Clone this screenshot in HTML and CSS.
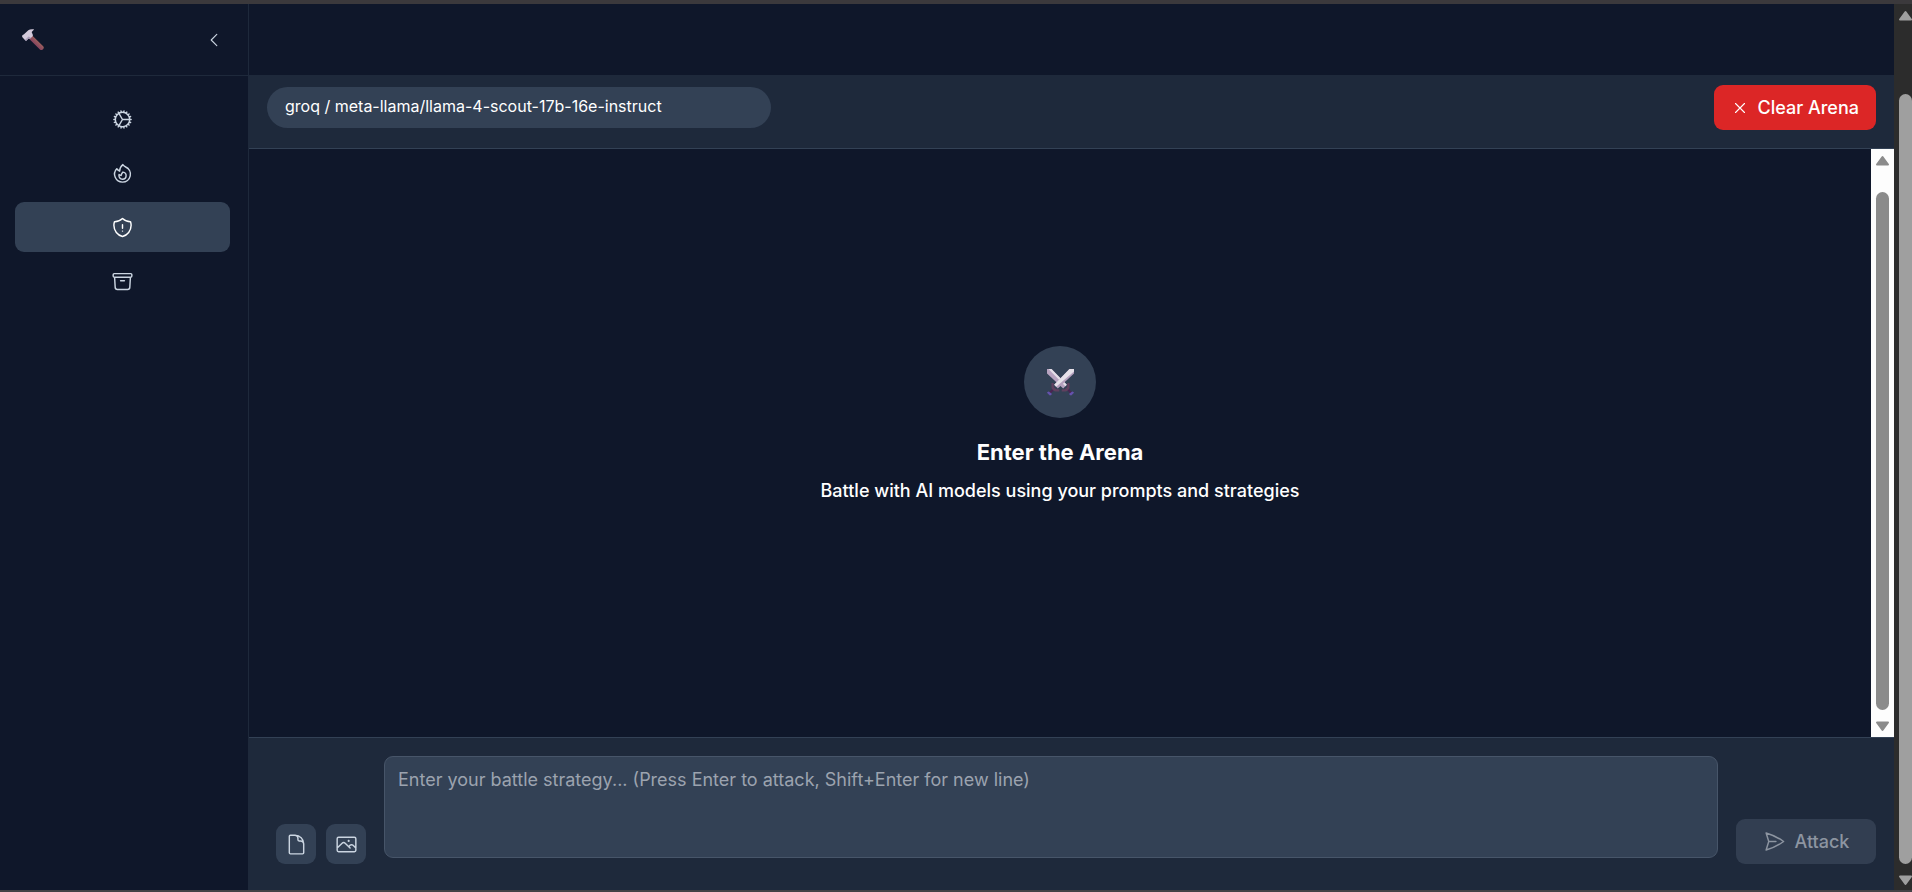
FILE: index.html
```html
<!DOCTYPE html>
<html lang="en">
<head>
<meta charset="utf-8">
<title>Arena</title>
<link rel="stylesheet" href="styles.css">
</head>
<body>
<div class="app">
  <aside class="sidebar">
    <div class="brand">
      <svg class="hammer" viewBox="0 0 22 22" role="img" aria-label="Hammer">
        <defs>
          <linearGradient id="handle" x1="0" y1="1" x2="1" y2="0">
            <stop offset=".3" stop-color="#7c3860"/><stop offset=".7" stop-color="#a56a5c"/>
          </linearGradient>
        </defs>
        <path d="M6.800 9.600 10.200 6.400 21.200 17.200q1.100 1.200.2 2.500-.4 1.100-1.600 1.300-1.100.2-1.900-.6Z" fill="url(#handle)"/>
        <path d="M.4 6.300 2 5.300 6.300 1.300Q8.200-.2 11.600.3q.7.300 0 .7L9.900 2.700q-.4.900.4 1.700l.6 1.600q.1 1-.7 1.700L8.200 9.600l-1.700-.1-1.900 2.100q-.9.300-1.700-.5L.4 8.300Q-.2 7 .4 6.300Z" fill="#d3cadb"/>
        <path d="M2.900 11.100 6.500 7.600l2.300.9-.6 1.100-1.700-.1-1.900 2.100q-.9.300-1.700-.5Z" fill="#aa9eba"/>
      </svg>
      <button class="collapse" type="button" aria-label="Collapse sidebar">
        <svg class="icon icon-sm" viewBox="0 0 24 24"><path d="M15.750 19.500 8.250 12l7.500-7.500"/></svg>
      </button>
    </div>
    <nav class="nav" aria-label="Main">
      <a class="nav-item" href="#settings" aria-label="Settings">
        <svg class="icon" viewBox="0 0 24 24"><path d="M4.500 12a7.500 7.500 0 0 0 15 0m-15 0a7.500 7.500 0 1 1 15 0m-15 0H3m16.500 0H21m-1.500 0H12m-8.457 3.077 1.410-.513m14.095-5.130 1.410-.513M5.106 17.785l1.150-.964m11.490-9.642 1.149-.964M7.501 19.795l.750-1.300m7.500-12.990.750-1.300m-6.063 16.658.260-1.477m2.605-14.772.260-1.477m0 17.726-.260-1.477M10.698 4.614l-.260-1.477M16.500 19.794l-.750-1.299M7.500 4.205 12 12m6.894 5.785-1.149-.964M6.256 7.178l-1.150-.964m15.352 8.864-1.410-.513M4.954 9.435l-1.410-.514M12.002 12l-3.750 6.495"/></svg>
      </a>
      <a class="nav-item" href="#fire" aria-label="Forge">
        <svg class="icon" viewBox="0 0 24 24"><path d="M15.362 5.214A8.252 8.252 0 0 1 12 21 8.250 8.250 0 0 1 6.038 7.047 8.287 8.287 0 0 0 9 9.601a8.983 8.983 0 0 1 3.361-6.867 8.210 8.210 0 0 0 3 2.480Z"/><path d="M12 18a3.750 3.750 0 0 0 .495-7.468 5.990 5.990 0 0 0-1.925 3.547 5.975 5.975 0 0 1-2.133-1.001A3.750 3.750 0 0 0 12 18Z"/></svg>
      </a>
      <a class="nav-item is-active" href="#arena" aria-label="Arena" aria-current="page">
        <svg class="icon" viewBox="0 0 24 24"><path d="M12 9v3.750m0-10.036A11.959 11.959 0 0 1 3.598 6 11.990 11.990 0 0 0 3 9.750c0 5.592 3.824 10.290 9 11.622 5.176-1.332 9-6.030 9-11.622 0-1.310-.210-2.570-.598-3.750h-.152c-3.196 0-6.100-1.250-8.250-3.286Zm0 13.036h.008v.008H12v-.008Z"/></svg>
      </a>
      <a class="nav-item" href="#archive" aria-label="Archive">
        <svg class="icon" viewBox="0 0 24 24"><path d="m20.250 7.500-.625 10.632a2.250 2.250 0 0 1-2.247 2.118H6.622a2.250 2.250 0 0 1-2.247-2.118L3.750 7.500M10 11.250h4M3.375 7.500h17.250c.621 0 1.125-.504 1.125-1.125v-1.500c0-.621-.504-1.125-1.125-1.125H3.375c-.621 0-1.125.504-1.125 1.125v1.500c0 .621.504 1.125 1.125 1.125Z"/></svg>
      </a>
    </nav>
  </aside>

  <main class="main">
    <header class="topbar"></header>
    <div class="toolbar">
      <div class="model">groq / meta-llama/llama-4-scout-17b-16e-instruct</div>
      <button class="btn btn-danger" type="button">
        <svg class="icon icon-sm" viewBox="0 0 24 24"><path d="M6 18 18 6M6 6l12 12"/></svg>
        Clear Arena
      </button>
    </div>

    <div class="arena">
      <section class="empty">
        <div class="badge">
          <svg class="swords" viewBox="0 0 27 27" role="img" aria-label="Crossed swords">
            <path d="M0 0h4.500L19.800 15.800l-3.600 3.600L0 4.500Z" fill="#b7a3c0"/>
            <path d="M1.500 0h3L19.800 15.800l-1.500 1.500Z" fill="#e4dfe8"/>
            <path d="M22.500 14v4.500q-.5 3.500-4 4h-3.800v-2.300h2.600q2.600-.5 3-3V14Z" fill="#60405f"/>
            <path d="m20.500 21.800 1.500-1.500 2.800 2.600-1.300 1.600Z" fill="#4b2452"/>
            <path d="m22.200 24.800 3-2.400q1.600.1 1.800 1.300l-2.800 2.700q-2-.1-2-1.600Z" fill="#6552ad"/>
            <path d="M27 0h-4.500L7.200 15.800l3.600 3.600L27 4.500Z" fill="#b49fbd"/>
            <path d="M27 0h-4.500L7.200 15.800l2 2L27 2.500Z" fill="#e6e1e9"/>
            <path d="M4.500 14v4.500q.5 3.500 4 4h3.800v-2.300H9.700q-2.600-.5-3-3V14Z" fill="#60405f"/>
            <path d="M6.500 21.800 5 20.300l-2.800 2.600 1.300 1.600Z" fill="#4b2452"/>
            <path d="m4.800 24.800-3-2.400Q.2 22.500 0 23.700l2.800 2.700q2-.1 2-1.600Z" fill="#6552ad"/>
          </svg>
        </div>
        <h1 class="empty-title">Enter the Arena</h1>
        <p class="empty-text">Battle with AI models using your prompts and strategies</p>
      </section>
      <div class="scroll scroll-light" aria-hidden="true">
        <svg class="arrow" viewBox="0 0 15 11"><path d="M7.500 2 13 9.500H2Z"/></svg>
        <div class="thumb"></div>
        <svg class="arrow" viewBox="0 0 15 11"><path d="M7.500 9 2 1.500h11Z"/></svg>
      </div>
    </div>

    <form class="composer">
      <div class="attach">
        <button class="btn-icon" type="button" aria-label="Attach file">
          <svg class="icon" viewBox="0 0 24 24"><path d="M19.500 14.250v-2.625a3.375 3.375 0 0 0-3.375-3.375h-1.500A1.125 1.125 0 0 1 13.500 7.125v-1.500a3.375 3.375 0 0 0-3.375-3.375H8.250m2.250 0H5.625c-.621 0-1.125.504-1.125 1.125v17.250c0 .621.504 1.125 1.125 1.125h12.750c.621 0 1.125-.504 1.125-1.125V11.250a9 9 0 0 0-9-9Z"/></svg>
        </button>
        <button class="btn-icon" type="button" aria-label="Attach image">
          <svg class="icon" viewBox="0 0 24 24"><path d="m2.250 15.750 5.159-5.159a2.250 2.250 0 0 1 3.182 0l5.159 5.159m-1.500-1.500 1.409-1.409a2.250 2.250 0 0 1 3.182 0l2.909 2.909m-18 3.750h16.500a1.500 1.500 0 0 0 1.500-1.500V6a1.500 1.500 0 0 0-1.500-1.500H3.750A1.500 1.500 0 0 0 2.250 6v12a1.500 1.500 0 0 0 1.500 1.500Zm10.500-11.250h.008v.008h-.008V8.250Zm.375 0a.375.375 0 1 1-.750 0 .375.375 0 0 1 .750 0Z"/></svg>
        </button>
      </div>
      <textarea class="prompt" aria-label="Battle strategy" placeholder="Enter your battle strategy... (Press Enter to attack, Shift+Enter for new line)"></textarea>
      <button class="btn btn-attack" type="submit" disabled>
        <svg class="icon" viewBox="0 0 24 24"><path d="M6 12 3.269 3.125A59.769 59.769 0 0 1 21.485 12 59.768 59.768 0 0 1 3.270 20.875L5.999 12Zm0 0h7.500"/></svg>
        Attack
      </button>
    </form>
  </main>

  <div class="scroll scroll-dark" aria-hidden="true">
    <svg class="arrow" viewBox="0 0 15 11"><path d="M7.500 2 13 9.500H2Z"/></svg>
    <div class="thumb"></div>
    <svg class="arrow" viewBox="0 0 15 11"><path d="M7.500 9 2 1.500h11Z"/></svg>
  </div>
</div>
</body>
</html>
```
FILE: styles.css
```css
*, *::before, *::after { box-sizing: border-box; }

body {
  margin: 0;
  background: #0f172a;
  color: #fff;
  font: 18px/27px Inter, sans-serif;
}

button, textarea { font: inherit; color: inherit; margin: 0; border: 0; }

.app {
  display: flex;
  height: 100vh;
  overflow: hidden;
  border-top: 4px solid #3b393c;
  border-bottom: 2px solid #444245;
}

.icon {
  width: 23px;
  height: 23px;
  flex: none;
  fill: none;
  stroke: currentColor;
  stroke-width: 1.5;
  stroke-linecap: round;
  stroke-linejoin: round;
}
.icon-sm { width: 18px; height: 18px; }

/* Sidebar */
.sidebar {
  flex: none;
  width: 249px;
  border-right: 1px solid #1e293b;
}
.brand {
  display: flex;
  align-items: center;
  justify-content: space-between;
  height: 72px;
  padding: 0 25px 0 22px;
  border-bottom: 1px solid #1e293b;
}
.hammer { width: 22px; height: 22px; }
.collapse {
  display: flex;
  padding: 0;
  background: none;
  color: #cbd5e1;
}
.nav {
  display: grid;
  gap: 4px;
  padding: 18px 18px 18px 15px;
}
.nav-item {
  display: flex;
  align-items: center;
  justify-content: center;
  height: 50px;
  border-radius: 9px;
  color: #cbd5e1;
}
.nav-item.is-active { background: #334155; color: #fff; }

/* Main column */
.main {
  flex: 1;
  min-width: 0;
  display: flex;
  flex-direction: column;
}
.topbar { flex: none; height: 71px; }
.toolbar {
  display: flex;
  align-items: flex-start;
  justify-content: space-between;
  padding: 10px 18px 18px 18px;
  background: #1e293b;
  border-bottom: 1px solid #334155;
}
.model {
  width: 504px;
  height: 41px;
  margin-top: 2px;
  padding: 6px 18px 0;
  border-radius: 21px;
  background: #334155;
  font-size: 16px;
}
.btn {
  display: flex;
  align-items: center;
  justify-content: center;
  gap: 9px;
  height: 45px;
  padding: 0 17px;
  border-radius: 9px;
  font-weight: 500;
}
.btn-danger { background: #dc2626; }

.arena { flex: 1; min-height: 0; display: flex; }
.empty {
  flex: 1;
  display: flex;
  flex-direction: column;
  align-items: center;
  justify-content: center;
  padding-bottom: 36px;
}
.badge {
  display: flex;
  align-items: center;
  justify-content: center;
  width: 72px;
  height: 72px;
  border-radius: 50%;
  background: #334155;
}
.swords { width: 27px; height: 27px; }
.empty-title {
  margin: 18px 0 9px;
  font-size: 22px;
  line-height: 32px;
  font-weight: 700;
}
.empty-text { margin: 0; font-weight: 500; }

/* Composer */
.composer {
  display: flex;
  align-items: flex-end;
  gap: 18px;
  padding: 18px 18px 26px 27px;
  background: #1e293b;
  border-top: 1px solid #334155;
}
.attach { display: flex; gap: 10px; }
.btn-icon {
  display: flex;
  align-items: center;
  justify-content: center;
  width: 40px;
  height: 40px;
  padding: 0;
  border-radius: 9px;
  background: #334155;
  color: #cbd5e1;
}
.prompt {
  flex: 1;
  min-width: 0;
  height: 102px;
  margin-bottom: 6px;
  padding: 9px 13px;
  border: 1px solid #475569;
  border-radius: 9px;
  background: #334155;
  resize: none;
}
.prompt::placeholder { color: #9ca3af; opacity: 1; }
.btn-attack {
  width: 140px;
  background: #323e51;
  color: #8d95a1;
}

/* Scroll tracks */
.scroll {
  flex: none;
  display: flex;
  flex-direction: column;
  align-items: center;
}
.arrow {
  width: 15px;
  height: 11px;
  flex: none;
  fill: currentColor;
  stroke: currentColor;
  stroke-width: 2;
  stroke-linejoin: round;
}
.thumb {
  flex: 1;
  width: 13px;
  border-radius: 7px;
  background: currentColor;
}
.scroll-light {
  width: 23px;
  padding: 6px 0 5px;
  background: #fdfdfd;
  color: #8b8b8b;
}
.scroll-light .thumb { margin: 26px 0 11px; }
.scroll-dark {
  width: 18px;
  padding: 6px 0 4px 4px;
  align-items: flex-start;
  overflow: hidden;
  background: #2c2c2c;
  color: #9f9f9f;
}
.scroll-dark .thumb { margin: 73px 0 11px 1px; }
```
